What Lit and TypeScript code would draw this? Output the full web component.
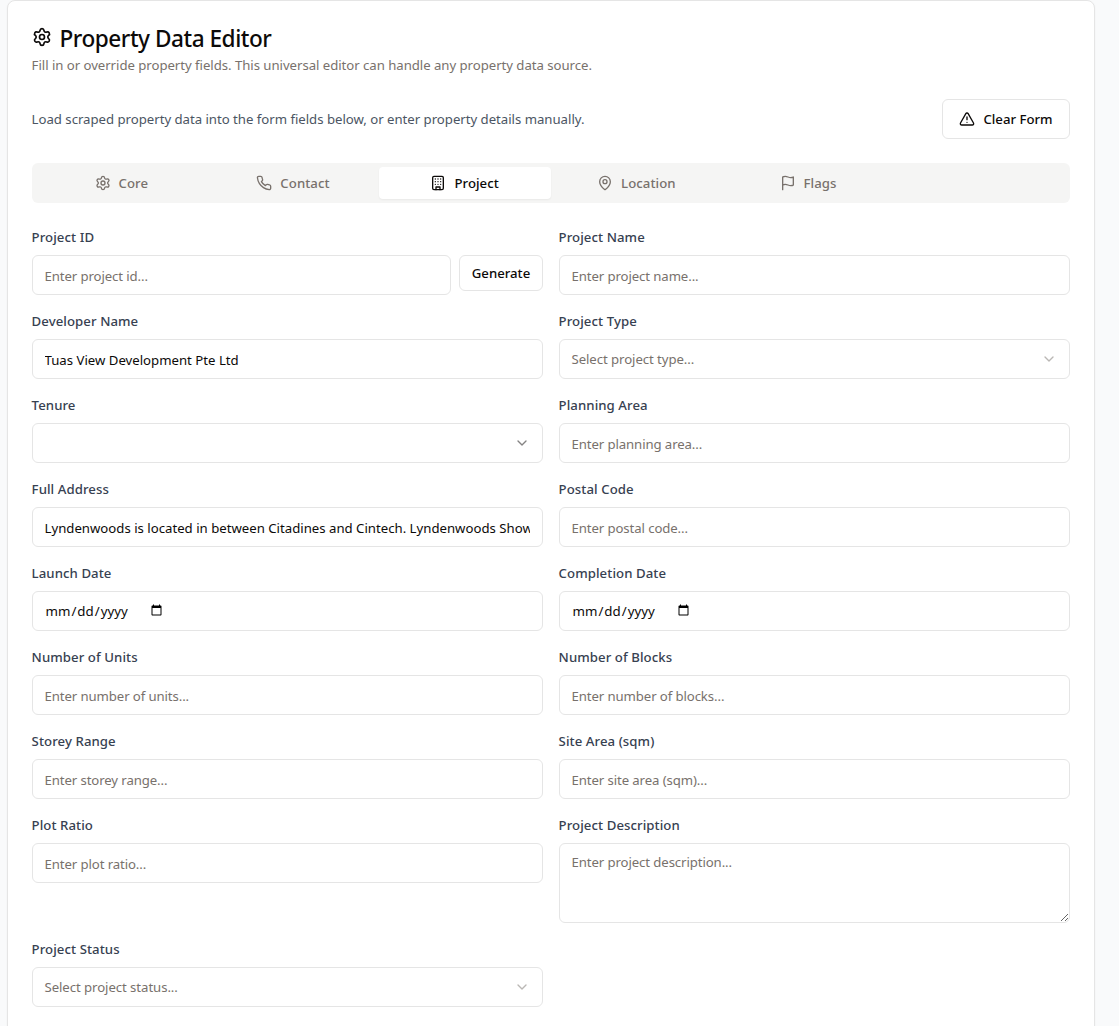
import { LitElement, html, svg, css } from "lit";
import { customElement, property } from "lit/decorators.js";
import { classMap } from "lit/directives/class-map.js";

const icons: Record<string, unknown> = {
  gear: svg`<path d="M9.671 4.136a2.34 2.34 0 0 1 4.659 0 2.34 2.34 0 0 0 3.319 1.915 2.34 2.34 0 0 1 2.33 4.033 2.34 2.34 0 0 0 0 3.831 2.34 2.34 0 0 1-2.33 4.033 2.34 2.34 0 0 0-3.319 1.915 2.34 2.34 0 0 1-4.659 0 2.34 2.34 0 0 0-3.32-1.915 2.34 2.34 0 0 1-2.33-4.033 2.34 2.34 0 0 0 0-3.831A2.34 2.34 0 0 1 6.35 6.051a2.34 2.34 0 0 0 3.319-1.915"/><circle cx="12" cy="12" r="3"/>`,
  phone: svg`<path d="M22 16.92v3a2 2 0 0 1-2.18 2 19.79 19.79 0 0 1-8.63-3.07 19.5 19.5 0 0 1-6-6 19.79 19.79 0 0 1-3.07-8.67A2 2 0 0 1 4.11 2h3a2 2 0 0 1 2 1.72 12.84 12.84 0 0 0 .7 2.81 2 2 0 0 1-.45 2.11L8.09 9.91a16 16 0 0 0 6 6l1.27-1.27a2 2 0 0 1 2.11-.45 12.84 12.84 0 0 0 2.81.7A2 2 0 0 1 22 16.92z"/>`,
  building: svg`<rect width="16" height="20" x="4" y="2" rx="2"/><path d="M9 22v-4h6v4M8 6h.01M16 6h.01M12 6h.01M12 10h.01M12 14h.01M16 10h.01M16 14h.01M8 10h.01M8 14h.01"/>`,
  pin: svg`<path d="M20 10c0 4.993-5.539 10.193-7.399 11.799a1 1 0 0 1-1.202 0C9.539 20.193 4 14.993 4 10a8 8 0 0 1 16 0"/><circle cx="12" cy="10" r="3"/>`,
  flag: svg`<path d="M4 15s1-1 4-1 5 2 8 2 4-1 4-1V3s-1 1-4 1-5-2-8-2-4 1-4 1zM4 22v-7"/>`,
  alert: svg`<path d="m21.73 18-8-14a2 2 0 0 0-3.48 0l-8 14A2 2 0 0 0 4 21h16a2 2 0 0 0 1.73-3M12 9v4M12 17h.01"/>`,
  chevron: svg`<path d="m6 9 6 6 6-6"/>`,
};

@customElement("line-icon")
class LineIcon extends LitElement {
  @property() name = "gear";
  static styles = css`
    :host { display: block; width: 16px; height: 16px; flex: none; }
    svg { display: block; width: 100%; height: 100%; }
  `;
  render() {
    return html`<svg viewBox="0 0 24 24" fill="none" stroke="currentColor" stroke-width="2" stroke-linecap="round" stroke-linejoin="round">${icons[this.name]}</svg>`;
  }
}

interface Field {
  label: string;
  kind?: "text" | "select" | "date" | "area" | "id";
  hint?: string;
  value?: string;
}

const fields: Field[] = [
  { label: "Project ID", kind: "id", hint: "Enter project id..." },
  { label: "Project Name", hint: "Enter project name..." },
  { label: "Developer Name", value: "Tuas View Development Pte Ltd" },
  { label: "Project Type", kind: "select", hint: "Select project type..." },
  { label: "Tenure", kind: "select" },
  { label: "Planning Area", hint: "Enter planning area..." },
  { label: "Full Address", value: "Lyndenwoods is located in between Citadines and Cintech. Lyndenwoods Showflat" },
  { label: "Postal Code", hint: "Enter postal code..." },
  { label: "Launch Date", kind: "date" },
  { label: "Completion Date", kind: "date" },
  { label: "Number of Units", hint: "Enter number of units..." },
  { label: "Number of Blocks", hint: "Enter number of blocks..." },
  { label: "Storey Range", hint: "Enter storey range..." },
  { label: "Site Area (sqm)", hint: "Enter site area (sqm)..." },
  { label: "Plot Ratio", hint: "Enter plot ratio..." },
  { label: "Project Description", kind: "area", hint: "Enter project description..." },
  { label: "Project Status", kind: "select", hint: "Select project status..." },
];

const tabs = [
  ["gear", "Core"],
  ["phone", "Contact"],
  ["building", "Project"],
  ["pin", "Location"],
  ["flag", "Flags"],
];

@customElement("app-root")
class AppRoot extends LitElement {
  static styles = css`
    :host {
      display: block; box-sizing: border-box; height: 1026px; overflow: hidden;
      padding: 0 24px 0 7px; background: #f9fafb; color: #0c0a09;
      font: 400 13.2px/20px "Noto Sans", "Open Sans", sans-serif;
    }
    * { box-sizing: border-box; }
    .card {
      height: 1100px; padding: 24px; background: #fff; border: 1px solid #e5e5e5;
      border-radius: 8px; box-shadow: 0 1px 2px rgba(0, 0, 0, 0.05);
    }
    .title { display: flex; gap: 7.5px; height: 24px; margin: 0 0 6px; font-size: 22.6px; line-height: 28px; font-weight: 500; letter-spacing: -0.47px; white-space: nowrap; }
    .title line-icon { width: 20px; height: 20px; margin-top: 2px; }
    .sub { margin: 0 0 24px; color: #78716c; letter-spacing: -0.04px; text-indent: -0.4px; }
    .intro { display: flex; justify-content: space-between; align-items: center; margin-bottom: 24px; color: #4b5563; }
    .intro p { margin: 0; letter-spacing: -0.02px; text-indent: -0.4px; }
    button { font: inherit; font-weight: 500; color: #0c0a09; background: #fff; border: 1px solid #e5e5e5; border-radius: 6px; padding: 0; white-space: nowrap; }
    .clear { display: flex; align-items: center; justify-content: center; gap: 8px; width: 128px; height: 40px; }
    .tabs { display: grid; grid-template-columns: repeat(6, 1fr); height: 40px; padding: 4px; margin-bottom: 24px; background: #f5f5f4; border-radius: 6px; color: #78716c; font-weight: 500; letter-spacing: 0.06px; }
    .tab { display: flex; align-items: center; justify-content: center; gap: 8px; padding-right: 1px; border-radius: 4px; }
    .active { background: #fff; color: #0c0a09; box-shadow: 0 1px 2px rgba(0, 0, 0, 0.05); }
    .grid { display: grid; grid-template-columns: 1fr 1fr; gap: 16px; align-items: start; }
    .field { display: flex; flex-direction: column; gap: 8px; min-width: 0; }
    label { color: #374151; font-weight: 500; letter-spacing: 0.07px; text-indent: -0.4px; }
    .row { display: flex; gap: 8px; align-items: flex-start; }
    .generate { width: 84px; height: 36px; flex: none; }
    .control { display: flex; width: 100%; min-width: 0; height: 40px; margin: 0; padding: 0 12px 0 11.5px; font: inherit; color: #0c0a09; background: #fff; border: 1px solid #e5e5e5; border-radius: 6px; outline: none; }
    .text { padding-top: 2px; }
    .control::placeholder { color: #78716c; opacity: 1; letter-spacing: -0.1px; }
    .select { align-items: center; justify-content: space-between; }
    .select line-icon { opacity: 0.5; }
    .hinted { color: #78716c; letter-spacing: -0.07px; }
    .area { height: 80px; padding: 8px 12px 8px 11.5px; resize: vertical; }
    .date { font-size: 13.3px; }
  `;

  private control(f: Field) {
    switch (f.kind) {
      case "id":
        return html`<div class="row"><input class="control text" placeholder=${f.hint ?? ""}><button class="generate">Generate</button></div>`;
      case "select":
        return html`<div class=${classMap({ control: true, select: true, hinted: !!f.hint })}><span>${f.hint ?? ""}</span><line-icon name="chevron"></line-icon></div>`;
      case "date":
        return html`<input class="control date" type="date">`;
      case "area":
        return html`<textarea class="control area" placeholder=${f.hint ?? ""}></textarea>`;
      default:
        return html`<input class="control text" placeholder=${f.hint ?? ""} .value=${f.value ?? ""}>`;
    }
  }

  render() {
    return html`
      <main class="card">
        <h3 class="title"><line-icon name="gear"></line-icon><span>Property Data Editor</span></h3>
        <p class="sub">Fill in or override property fields. This universal editor can handle any property data source.</p>
        <div class="intro">
          <p>Load scraped property data into the form fields below, or enter property details manually.</p>
          <button class="clear"><line-icon name="alert"></line-icon><span>Clear Form</span></button>
        </div>
        <nav class="tabs">
          ${tabs.map(([icon, name]) => html`<div class=${classMap({ tab: true, active: name === "Project" })}><line-icon name=${icon}></line-icon><span>${name}</span></div>`)}
        </nav>
        <div class="grid">
          ${fields.map((f) => html`<div class="field"><label>${f.label}</label>${this.control(f)}</div>`)}
        </div>
      </main>`;
  }
}
